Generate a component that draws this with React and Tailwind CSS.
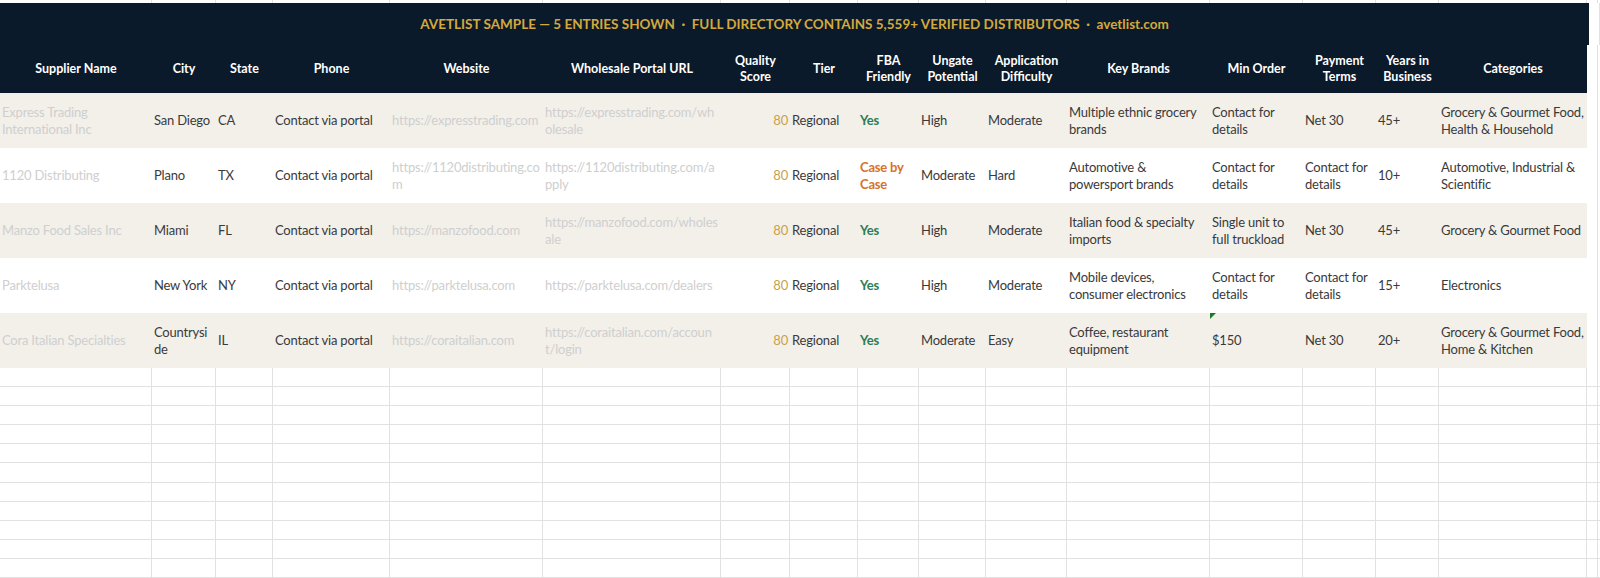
const cols = 'grid grid-cols-[152px_64px_57px_117px_153px_178px_69px_68px_61px_67px_81px_143px_93px_73px_63px_148px_11px_32px]';

const headers = ['Supplier Name', 'City', 'State', 'Phone', 'Website', 'Wholesale Portal URL', 'Quality Score', 'Tier', 'FBA Friendly', 'Ungate Potential', 'Application Difficulty', 'Key Brands', 'Min Order', 'Payment Terms', 'Years in Business', 'Categories'];

const rows = [
  ['Express Trading International Inc', 'San Diego', 'CA', 'https://expresstrading.com', 'https://expresstrading.com/wholesale', 'Yes', 'High', 'Moderate', 'Multiple ethnic grocery brands', 'Contact for details', 'Net 30', '45+', 'Grocery & Gourmet Food, Health & Household'],
  ['1120 Distributing', 'Plano', 'TX', 'https://1120distributing.com', 'https://1120distributing.com/apply', 'Case by Case', 'Moderate', 'Hard', 'Automotive & powersport brands', 'Contact for details', 'Contact for details', '10+', 'Automotive, Industrial & Scientific'],
  ['Manzo Food Sales Inc', 'Miami', 'FL', 'https://manzofood.com', 'https://manzofood.com/wholesale', 'Yes', 'High', 'Moderate', 'Italian food & specialty imports', 'Single unit to full truckload', 'Net 30', '45+', 'Grocery & Gourmet Food'],
  ['Parktelusa', 'New York', 'NY', 'https://parktelusa.com', 'https://parktelusa.com/dealers', 'Yes', 'High', 'Moderate', 'Mobile devices, consumer electronics', 'Contact for details', 'Contact for details', '15+', 'Electronics'],
  ['Cora Italian Specialties', 'Countryside', 'IL', 'https://coraitalian.com', 'https://coraitalian.com/account/login', 'Yes', 'Moderate', 'Easy', 'Coffee, restaurant equipment', '$150', 'Net 30', '20+', 'Grocery & Gourmet Food, Home & Kitchen'],
];

function Cell({ children, className = '' }) {
  return <div className={'flex items-center px-[2px] leading-[17px] min-w-0 ' + className}>{children}</div>;
}

export default function App() {
  return (
    <div className="w-[1600px] h-[578px] overflow-hidden bg-white text-[13px] tracking-[-0.2px] text-[#3a3a3a]" style={{ fontFamily: 'Lato, "Open Sans", sans-serif' }}>
      <div className={cols + ' h-[3px]'}>
        {Array.from({ length: 18 }).map((_, i) => <div key={i} className="border-r border-[#e1e1e1]" />)}
      </div>
      <div className="flex">
        <div className="w-[1589px] h-[42px] bg-[#0b1a2a] flex items-center justify-center font-bold text-[#d4a93c] text-[13.5px] tracking-normal">
          AVETLIST SAMPLE — 5 ENTRIES SHOWN &nbsp;·&nbsp; FULL DIRECTORY CONTAINS 5,559+ VERIFIED DISTRIBUTORS &nbsp;·&nbsp; avetlist.com
        </div>
        <div className="w-[11px] border-r border-[#e1e1e1]" />
      </div>
      <div className={cols + ' h-[48px]'}>
        {headers.map((h, i) => (
          <div key={i} className="bg-[#0b1a2a] text-white font-bold text-[12.5px] tracking-normal leading-[16px] flex items-center justify-center text-center px-1">{h}</div>
        ))}
        <div className="border-r border-[#e1e1e1]" />
        <div />
      </div>
      {rows.map((r, i) => {
        const bg = i % 2 === 0 ? 'bg-[#f3f0ea]' : 'bg-white';
        return (
          <div key={i} className={cols + ' h-[55px]'}>
            <Cell className={bg + ' text-[#cfcfcf]'}>{r[0]}</Cell>
            <Cell className={bg + ' break-all'}>{r[1]}</Cell>
            <Cell className={bg}>{r[2]}</Cell>
            <Cell className={bg}>Contact via portal</Cell>
            <Cell className={bg + ' text-[#cfcfcf] break-all'}>{r[3]}</Cell>
            <Cell className={bg + ' text-[#cfcfcf] break-all'}>{r[4]}</Cell>
            <Cell className={bg + ' justify-end text-[#c9a14a]'}>80</Cell>
            <Cell className={bg}>Regional</Cell>
            <Cell className={bg + ' font-bold ' + (r[5] === 'Yes' ? 'text-[#2e7d57]' : 'text-[#d9702b]')}>{r[5]}</Cell>
            <Cell className={bg}>{r[6]}</Cell>
            <Cell className={bg}>{r[7]}</Cell>
            <Cell className={bg}>{r[8]}</Cell>
            <Cell className={bg + ' relative'}>
              {i === 4 && <span className="absolute left-0 top-0 w-0 h-0 border-t-[6px] border-r-[6px] border-t-[#1a7a2a] border-r-transparent" />}
              {r[9]}
            </Cell>
            <Cell className={bg}>{r[10]}</Cell>
            <Cell className={bg}>{r[11]}</Cell>
            <Cell className={bg}>{r[12]}</Cell>
            <div className="border-r border-[#e1e1e1]" />
            <div />
          </div>
        );
      })}
      {Array.from({ length: 12 }).map((_, i) => (
        <div key={i} className={cols + ' h-[19.1px] border-b border-[#e1e1e1]'}>
          {Array.from({ length: 18 }).map((_, j) => <div key={j} className="border-r border-[#e1e1e1]" />)}
        </div>
      ))}
    </div>
  );
}
